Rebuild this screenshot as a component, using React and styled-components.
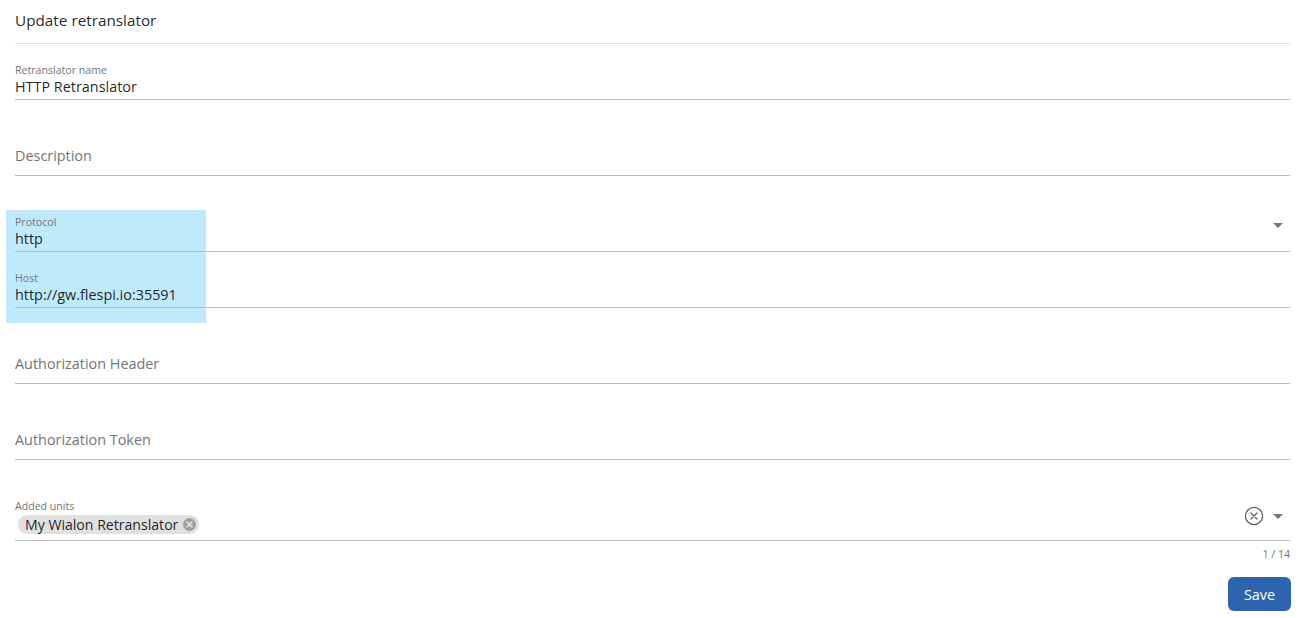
import React from "react";
import styled, { createGlobalStyle } from "styled-components";

const GlobalStyle = createGlobalStyle`
  html, body {
    margin: 0;
    padding: 0;
    background: #fff;
    font-family: "Open Sans", "Liberation Sans", sans-serif;
    color: rgba(0, 0, 0, 0.87);
  }
  * { box-sizing: border-box; }
`;

function Arrow() {
  return (
    <ArrowIcon viewBox="0 0 10 5">
      <path d="M0 0 L10 0 L5 5 Z" fill="#757575" />
    </ArrowIcon>
  );
}

function Field({ label, value, noBottom, append }) {
  const floated = value !== undefined;
  return (
    <FieldWrap noBottom={noBottom}>
      <Control>
        <Inner floated={floated}>
          {floated ? (
            <>
              <SmallLabel>{label}</SmallLabel>
              {value}
            </>
          ) : (
            <BigLabel>{label}</BigLabel>
          )}
        </Inner>
        {append && <Append>{append}</Append>}
      </Control>
    </FieldWrap>
  );
}

function App() {
  return (
    <Page>
      <GlobalStyle />
      <Header>Update retranslator</Header>
      <Field label="Retranslator name" value={<Value>HTTP Retranslator</Value>} />
      <Field label="Description" />
      <Group>
        <Field
          label="Protocol"
          value={<Value>http</Value>}
          noBottom
          append={<Arrow />}
        />
        <Field label="Host" value={<Value>http://gw.flespi.io:35591</Value>} />
      </Group>
      <Field label="Authorization Header" />
      <Field label="Authorization Token" />
      <FieldWrap noBottom>
        <Control tall>
          <Inner floated>
            <SmallLabel>Added units</SmallLabel>
            <Chip>
              My Wialon Retranslator
              <ChipRemove viewBox="0 0 12 12">
                <circle cx="6" cy="6" r="6" fill="#9e9e9e" />
                <path
                  d="M3.8 3.8 L8.2 8.2 M8.2 3.8 L3.8 8.2"
                  stroke="#e0e0e0"
                  strokeWidth="1.5"
                  strokeLinecap="round"
                />
              </ChipRemove>
            </Chip>
          </Inner>
          <Append units>
            <ClearIcon viewBox="0 0 20 20">
              <circle cx="10" cy="10" r="8.6" fill="none" stroke="#616161" strokeWidth="1.3" />
              <path
                d="M7 7 L13 13 M13 7 L7 13"
                stroke="#616161"
                strokeWidth="1.3"
                strokeLinecap="round"
              />
            </ClearIcon>
            <Arrow />
          </Append>
        </Control>
        <Counter>1 / 14</Counter>
      </FieldWrap>
      <Actions>
        <SaveButton>Save</SaveButton>
      </Actions>
    </Page>
  );
}

export default App;

const Page = styled.div`
  width: 1300px;
  height: 618px;
  padding: 0 10px 0 15px;
  overflow: hidden;
`;

const Header = styled.div`
  height: 44px;
  padding-top: 9px;
  font-size: 15.3px;
  font-weight: 500;
  line-height: 22px;
  color: rgba(0, 0, 0, 0.87);
  border-bottom: 1px solid #e0e0e0;
`;

const Group = styled.div`
  position: relative;
  &::before {
    content: "";
    position: absolute;
    left: -9px;
    top: 14px;
    width: 200px;
    height: 113px;
    background: #beeafc;
    z-index: 0;
  }
  & > * {
    position: relative;
    z-index: 1;
  }
`;

const FieldWrap = styled.div`
  padding-bottom: ${(p) => (p.noBottom ? "0" : "20px")};
`;

const Control = styled.div`
  display: flex;
  align-items: flex-start;
  height: ${(p) => (p.tall ? "61px" : "56px")};
  border-bottom: 1px solid #bdbdbd;
`;

const Inner = styled.div`
  flex: 1;
  display: flex;
  flex-direction: column;
  align-items: flex-start;
  padding-top: ${(p) => (p.floated ? "19px" : "27px")};
`;

const SmallLabel = styled.div`
  font-size: 10.6px;
  line-height: 14px;
  color: #757575;
`;

const BigLabel = styled.div`
  font-size: 14.4px;
  line-height: 18px;
  color: #757575;
`;

const Value = styled.div`
  font-size: 14.4px;
  line-height: 20px;
  color: rgba(0, 0, 0, 0.87);
`;

const Append = styled.div`
  display: flex;
  align-items: center;
  gap: ${(p) => (p.units ? "9px" : "15px")};
  padding: 27px 7px 0 0;
`;

const ArrowIcon = styled.svg`
  width: 10px;
  height: 5px;
  display: block;
`;

const ClearIcon = styled.svg`
  width: 20px;
  height: 20px;
  display: block;
  margin-top: -1px;
`;

const Chip = styled.div`
  display: inline-flex;
  align-items: center;
  gap: 5px;
  margin: 2px 0 0 3px;
  height: 19px;
  padding: 0 3px 0 7px;
  background: #e0e0e0;
  border-radius: 10px;
  font-size: 14.1px;
  color: rgba(0, 0, 0, 0.87);
`;

const ChipRemove = styled.svg`
  width: 13px;
  height: 13px;
  display: block;
`;

const Counter = styled.div`
  text-align: right;
  font-size: 10.6px;
  line-height: 14px;
  color: #757575;
  padding-top: 6px;
`;

const Actions = styled.div`
  display: flex;
  justify-content: flex-end;
  padding-top: 16px;
`;

const SaveButton = styled.button`
  width: 63px;
  height: 34px;
  border: none;
  border-radius: 6px;
  background: #2d64b0;
  color: #fff;
  font-family: "Open Sans", "Liberation Sans", sans-serif;
  font-size: 14.4px;
  margin-right: -1px;
  cursor: pointer;
`;
